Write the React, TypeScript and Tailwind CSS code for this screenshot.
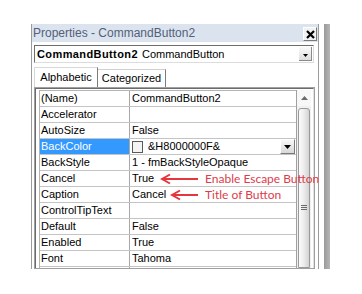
import React from 'react'

const rows: { name: string; value: string; kind?: 'color' | 'colorSel' }[] = [
  { name: '(Name)', value: 'CommandButton2' },
  { name: 'Accelerator', value: '' },
  { name: 'AutoSize', value: 'False' },
  { name: 'BackColor', value: '&H8000000F&', kind: 'colorSel' },
  { name: 'BackStyle', value: '1 - fmBackStyleOpaque' },
  { name: 'Cancel', value: 'True' },
  { name: 'Caption', value: 'Cancel' },
  { name: 'ControlTipText', value: '' },
  { name: 'Default', value: 'False' },
  { name: 'Enabled', value: 'True' },
  { name: 'Font', value: 'Tahoma' },
]

function DropTriangle() {
  return (
    <svg width="7" height="4" viewBox="0 0 7 4">
      <path d="M0 0 L7 0 L3.5 4 Z" fill="#000" />
    </svg>
  )
}

function Arrow({ width }: { width: number }) {
  return (
    <svg width={width} height="12" viewBox={`0 0 ${width} 12`}>
      <path d={`M2 6 L${width} 6 M10 1.5 L2 6 L10 10.5`} stroke="#e5363c" strokeWidth="2" fill="none" strokeLinejoin="miter" />
    </svg>
  )
}

export default function App() {
  return (
    <div className="relative w-[362px] h-[294px] bg-white overflow-hidden font-['Liberation_Sans',Arial,sans-serif] text-black">
      <div className="flex items-start pt-[24px] pl-[31px]">
        {/* panel */}
        <div className="w-[288px] h-[245px] border-x border-[#9c9c9c] bg-white flex flex-col overflow-hidden">
          {/* title bar */}
          <div className="h-[18px] bg-[#dbe4ee] flex items-center justify-between pl-[1px] pr-[1px] shrink-0">
            <span className="text-[12px] leading-none text-[#526079]">Properties - CommandButton2</span>
            <div className="w-[14px] h-[14px] mt-[2px] bg-[#f2f2f2] border-t border-l border-white border-r border-b border-r-[#7a7a7a] border-b-[#7a7a7a] flex items-center justify-center">
              <svg width="9" height="9" viewBox="0 0 9 9">
                <path d="M1 1 L8 8 M8 1 L1 8" stroke="#000" strokeWidth="2.2" />
              </svg>
            </div>
          </div>

          {/* object combo */}
          <div className="mt-[3px] ml-[2px] w-[280px] h-[18px] border-t border-l border-[#6d6d6d] border-r border-b border-r-[#dcdcdc] border-b-[#dcdcdc] flex items-center bg-white shrink-0">
            <span className="pl-[2px] text-[11px] font-bold tracking-[0.4px]">CommandButton2</span>
            <span className="pl-[4px] text-[11px]">CommandButton</span>
            <div className="ml-auto mr-[1px] w-[13px] h-[14px] bg-gradient-to-b from-[#fafafa] to-[#dedede] border-r border-b border-[#8a8a8a] flex items-end justify-center pb-[3px]">
              <svg width="5" height="3" viewBox="0 0 5 3">
                <path d="M0 0 L5 0 L2.5 3 Z" fill="#000" />
              </svg>
            </div>
          </div>

          {/* tabs */}
          <div className="mt-[4px] ml-[2px] h-[20px] flex items-end shrink-0">
            <div className="w-[64px] h-[20px] border-l border-t border-[#d8d8d8] border-r border-r-[#7c7c7c] flex items-center justify-center text-[11px]">
              Alphabetic
            </div>
            <div className="w-[68px] h-[18px] border-t border-[#d0d0d0] border-r border-r-[#7c7c7c] flex items-center justify-center text-[11px]">
              Categorized
            </div>
          </div>

          {/* grid */}
          <div className="ml-[2px] w-[281px] border border-[#a0a0a0] bg-white grow min-h-0 overflow-hidden">
            <div className="h-full border-l border-t border-[#6b6b6b] border-r border-r-[#e2e2e2] pl-[3px] pr-[2px] pt-[1px] flex">
              <div className="w-[257px] border-l border-t border-[#b4b4b4] flex flex-col">
                {rows.map(r => (
                  <div key={r.name} className="h-[16px] shrink-0 border-b border-[#c4c4c4] flex text-[11px]">
                    <div className={`w-[90px] shrink-0 border-r border-[#a8a8a8] pl-[1px] flex items-center ${r.kind === 'colorSel' ? 'bg-[#3399ff] text-white' : ''}`}>
                      {r.name}
                    </div>
                    <div className="flex-1 flex items-center pl-[2px]">
                      {r.kind && (
                        <span className="w-[11px] h-[12px] border border-[#5a5a5a] bg-[#f4f4f4] mr-[5px] shrink-0" />
                      )}
                      <span>{r.value}</span>
                      {r.kind === 'colorSel' && (
                        <div className="ml-auto mr-[1px] w-[15px] h-[15px] bg-gradient-to-b from-[#f8f8f8] to-[#d8d8d8] border-t border-l border-white border-r border-b border-r-[#7a7a7a] border-b-[#7a7a7a] flex items-center justify-center">
                          <DropTriangle />
                        </div>
                      )}
                    </div>
                  </div>
                ))}
                {/* next row, only its top edge is in view */}
                <div className="grow flex">
                  <div className="w-[90px] shrink-0 border-r border-[#a8a8a8]" />
                  <div className="pl-[2px] pt-[1px]">
                    <div className="w-[11px] h-[4px] border-t border-x border-[#5a5a5a] bg-[#f4f4f4]" />
                  </div>
                </div>
              </div>
              {/* scrollbar */}
              <div className="w-[15px] border-l border-[#a0a0a0] flex flex-col bg-[#f0f0f0]">
                <div className="h-[16px] shrink-0 bg-[#f7f7f7] flex items-center justify-center">
                  <svg width="7" height="4" viewBox="0 0 7 4">
                    <path d="M0 4 L7 4 L3.5 0 Z" fill="#6a6a6a" />
                  </svg>
                </div>
                <div className="mt-[2px] mx-[1px] grow rounded-t-[3px] border border-[#9a9a9a] bg-gradient-to-r from-[#fbfbfb] via-[#ececec] to-[#d2d2d2] flex flex-col items-center pt-[96px]">
                  <div className="w-[6px] h-[1px] bg-[#6a6a6a]" />
                  <div className="w-[6px] h-[1px] bg-[#6a6a6a] mt-[1px]" />
                  <div className="w-[6px] h-[1px] bg-[#6a6a6a] mt-[1px]" />
                </div>
              </div>
            </div>
          </div>
        </div>
        {/* outer window edge */}
        <div className="ml-[5px] w-[6px] h-[245px] bg-gradient-to-r from-[#9a9a9a] to-[#b6b6b6]" />
      </div>

      {/* annotations */}
      <div className="absolute left-[160px] top-[173px]">
        <Arrow width={38} />
      </div>
      <div className="absolute left-[205px] top-[171px] text-[12px] leading-[16px] text-[#dc3c4b] font-['Lato',sans-serif] whitespace-nowrap">
        Enable Escape Button
      </div>
      <div className="absolute left-[170px] top-[189px]">
        <Arrow width={28} />
      </div>
      <div className="absolute left-[205px] top-[187px] text-[12px] leading-[16px] text-[#dc3c4b] font-['Lato',sans-serif] whitespace-nowrap">
        Title of Button
      </div>
    </div>
  )
}
